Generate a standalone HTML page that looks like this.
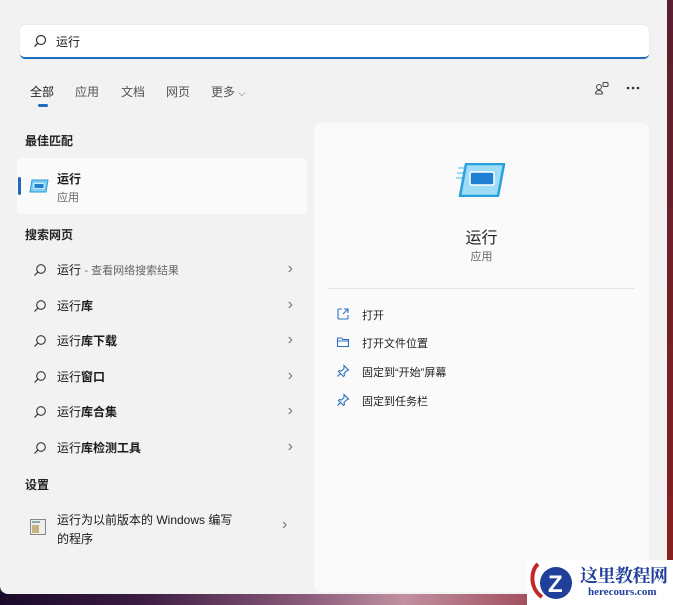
<!DOCTYPE html>
<html><head><meta charset="utf-8"><style>
*{margin:0;padding:0;box-sizing:border-box}
body{width:673px;height:605px;overflow:hidden;background:#3a1a2a;font-family:"Liberation Sans","Noto Sans CJK SC",sans-serif;font-size:12px;color:#1a1a1a;position:relative}
.bg{position:absolute;left:0;top:592px;width:673px;height:13px;background:linear-gradient(90deg,#1a0a2a 0%,#3a1a40 20%,#8a5a7a 45%,#c090a0 60%,#a04a5a 80%,#7a1a1a 100%)}
.rs{position:absolute;left:666px;top:0;width:7px;height:605px;background:linear-gradient(#5a2030,#8a2020)}
.panel{position:absolute;left:0;top:0;width:667px;height:594px;background:#f2f2f2;border-radius:0 0 8px 8px}
.search{position:absolute;left:20px;top:25px;width:629px;height:34px;background:#fff;border-radius:5px;border-bottom:2px solid #1f6bbd;box-shadow:0 0 1px #ccc}
.search span{position:absolute;left:36px;top:8px;font-size:12px}
.tabs{position:absolute;top:83px;left:30px;font-size:12px;color:#555}
.tabs span{position:absolute;white-space:nowrap}
.ul{position:absolute;left:38px;top:104px;width:10px;height:3px;border-radius:2px;background:#1f6bbd}
.h{position:absolute;left:25px;font-weight:bold;font-size:12px;color:#222}
.best{position:absolute;left:17px;top:158px;width:290px;height:56px;background:#fafafa;border-radius:4px}
.bar{position:absolute;left:18px;top:177px;width:3px;height:18px;background:#1f6bbd;border-radius:2px}
.row{position:absolute;left:33px;width:260px;height:20px}
.row .t{position:absolute;left:24px;top:2px;font-weight:bold;font-size:12px;white-space:nowrap}
.row .c{position:absolute;right:0;top:0px;color:#777;font-size:16px;line-height:20px}
.right{position:absolute;left:314px;top:123px;width:335px;height:469px;background:#fafafa;border-radius:6px}
.act{position:absolute;left:48px;font-size:11px;color:#222}
.act svg{position:absolute;left:-26px;top:0}
</style></head><body>
<div class="bg"></div><div class="rs"></div>
<div class="panel">
<div class="search"><svg style="position:absolute;left:13px;top:9px" width="14" height="14" viewBox="0 0 14 14"><circle cx="8" cy="6" r="4.5" fill="none" stroke="#333" stroke-width="1.2"/><path d="M4.8 9.2L1.5 12.5" stroke="#333" stroke-width="1.3"/></svg><span>运行</span></div>
<div class="tabs"><span style="left:0;color:#222">全部</span><span style="left:45px">应用</span><span style="left:91px">文档</span><span style="left:136px">网页</span><span style="left:181px">更多 <small style="font-size:9px">⌵</small></span></div>
<div class="ul"></div>
<svg style="position:absolute;left:594px;top:81px" width="16" height="16" viewBox="0 0 16 16" fill="none" stroke="#444" stroke-width="1"><circle cx="5" cy="6" r="2.5"/><path d="M1.5 13c0-2.5 1.5-3.5 3.5-3.5s3.5 1 3.5 3.5M1.5 13h7"/><rect x="9" y="1.5" width="5" height="4" rx="1"/></svg>
<svg style="position:absolute;left:626px;top:86px" width="14" height="4" viewBox="0 0 14 4" fill="#333"><circle cx="2" cy="2" r="1.3"/><circle cx="7" cy="2" r="1.3"/><circle cx="12" cy="2" r="1.3"/></svg>
<div class="h" style="top:132px">最佳匹配</div>
<div class="best"></div><div class="bar"></div>
<svg style="position:absolute;left:29px;top:179px" width="20" height="14" viewBox="0 0 20 14"><path d="M3 1h16l-2 12H1z" fill="#7dd0f2" stroke="#2a9ad8" stroke-width="1"/><rect x="5" y="4.5" width="10" height="5" rx="1" fill="#1f7fd0" stroke="#fff" stroke-width="0.8"/></svg>
<div style="position:absolute;left:57px;top:170px;font-weight:bold">运行</div>
<div style="position:absolute;left:57px;top:189px;font-size:11px;color:#666">应用</div>
<div class="h" style="top:226px">搜索网页</div>
<div class="row" style="top:259px"><svg width="14" height="14" viewBox="0 0 14 14" style="position:absolute;top:4px"><circle cx="8" cy="6" r="4.3" fill="none" stroke="#333" stroke-width="1.1"/><path d="M4.8 9.2L1.5 12.5" stroke="#333" stroke-width="1.2"/></svg><span class="t" style="font-weight:normal">运行 <span style="color:#666;font-size:11px">- 查看网络搜索结果</span></span><span class="c">›</span></div>
<div class="row" style="top:295px"><svg width="14" height="14" viewBox="0 0 14 14" style="position:absolute;top:4px"><circle cx="8" cy="6" r="4.3" fill="none" stroke="#333" stroke-width="1.1"/><path d="M4.8 9.2L1.5 12.5" stroke="#333" stroke-width="1.2"/></svg><span class="t"><span style="font-weight:normal">运行</span>库</span><span class="c">›</span></div>
<div class="row" style="top:330px"><svg width="14" height="14" viewBox="0 0 14 14" style="position:absolute;top:4px"><circle cx="8" cy="6" r="4.3" fill="none" stroke="#333" stroke-width="1.1"/><path d="M4.8 9.2L1.5 12.5" stroke="#333" stroke-width="1.2"/></svg><span class="t"><span style="font-weight:normal">运行</span>库下载</span><span class="c">›</span></div>
<div class="row" style="top:366px"><svg width="14" height="14" viewBox="0 0 14 14" style="position:absolute;top:4px"><circle cx="8" cy="6" r="4.3" fill="none" stroke="#333" stroke-width="1.1"/><path d="M4.8 9.2L1.5 12.5" stroke="#333" stroke-width="1.2"/></svg><span class="t"><span style="font-weight:normal">运行</span>窗口</span><span class="c">›</span></div>
<div class="row" style="top:401px"><svg width="14" height="14" viewBox="0 0 14 14" style="position:absolute;top:4px"><circle cx="8" cy="6" r="4.3" fill="none" stroke="#333" stroke-width="1.1"/><path d="M4.8 9.2L1.5 12.5" stroke="#333" stroke-width="1.2"/></svg><span class="t"><span style="font-weight:normal">运行</span>库合集</span><span class="c">›</span></div>
<div class="row" style="top:437px"><svg width="14" height="14" viewBox="0 0 14 14" style="position:absolute;top:4px"><circle cx="8" cy="6" r="4.3" fill="none" stroke="#333" stroke-width="1.1"/><path d="M4.8 9.2L1.5 12.5" stroke="#333" stroke-width="1.2"/></svg><span class="t"><span style="font-weight:normal">运行</span>库检测工具</span><span class="c">›</span></div>
<div class="h" style="top:476px">设置</div>
<svg style="position:absolute;left:30px;top:519px" width="16" height="16" viewBox="0 0 16 16"><rect x="0.5" y="0.5" width="15" height="15" fill="#eee" stroke="#888"/><rect x="2" y="6" width="7" height="8" fill="#c8b080"/><rect x="2" y="2" width="8" height="2" fill="#8aa"/></svg>
<div style="position:absolute;left:57px;top:511px;line-height:19px">运行为以前版本的 Windows 编写<br>的程序</div>
<div style="position:absolute;left:282px;top:516px;color:#777;font-size:16px">›</div>
<div class="right">
<svg style="position:absolute;left:142px;top:40px" width="50" height="34" viewBox="0 0 50 34"><path d="M2 5h8M1 10h8M0 15h8" stroke="#9fd8f2" stroke-width="2"/><path d="M10 1h38l-6 32H4z" fill="#9fdcf6" stroke="#29a0e0" stroke-width="2.5" stroke-linejoin="round"/><rect x="14" y="9" width="24" height="13" rx="2" fill="#1f80d6" stroke="#fff" stroke-width="1.5"/></svg>
<div style="position:absolute;left:0;width:335px;text-align:center;top:101px;font-size:16px;color:#222">运行</div>
<div style="position:absolute;left:0;width:335px;text-align:center;top:125px;font-size:11px;color:#666">应用</div>
<div style="position:absolute;left:14px;top:165px;width:306px;height:1px;background:#e4e4e4"></div>
<div class="act" style="top:184px"><svg width="14" height="14" viewBox="0 0 14 14" fill="none" stroke="#2a72c0" stroke-width="1.1"><path d="M6 2H3a1 1 0 0 0-1 1v8a1 1 0 0 0 1 1h8a1 1 0 0 0 1-1V8M8 2h4v4M12 2L7 7"/></svg>打开</div>
<div class="act" style="top:212px"><svg width="14" height="14" viewBox="0 0 14 14" fill="none" stroke="#2a72c0" stroke-width="1.1"><path d="M1.5 3h4l1.5 1.5h5.5v7h-11z M1.5 6h11"/></svg>打开文件位置</div>
<div class="act" style="top:241px"><svg width="14" height="14" viewBox="0 0 14 14" fill="none" stroke="#2a72c0" stroke-width="1.1"><path d="M8 1.5l4.5 4.5-2 1-2.5 2.5.5 2-1 1-5-5 1-1 2 .5L8 4.5z M4.5 9.5L1.5 12.5"/></svg>固定到“开始”屏幕</div>
<div class="act" style="top:270px"><svg width="14" height="14" viewBox="0 0 14 14" fill="none" stroke="#2a72c0" stroke-width="1.1"><path d="M8 1.5l4.5 4.5-2 1-2.5 2.5.5 2-1 1-5-5 1-1 2 .5L8 4.5z M4.5 9.5L1.5 12.5"/></svg>固定到任务栏</div>
</div>
</div>
<div style="position:absolute;left:527px;top:560px;width:146px;height:45px;background:#fff"></div>
<svg style="position:absolute;left:528px;top:561px" width="48" height="42" viewBox="0 0 48 42"><path d="M10 3C2 10 2 28 14 36" stroke="#c0282a" stroke-width="4" fill="none"/><circle cx="28" cy="22" r="16" fill="#1f3f9a"/><text x="20" y="31" font-size="24" font-weight="bold" fill="#fff" font-family="Liberation Sans">Z</text></svg>
<div style="position:absolute;left:580px;top:562px;font-size:18px;font-weight:bold;color:#1f3f9a;font-family:'Liberation Serif','Noto Serif CJK SC',serif;letter-spacing:-0.5px">这里教程网</div>
<div style="position:absolute;left:588px;top:586px;font-size:11px;font-weight:bold;color:#1f3f9a;font-family:'Liberation Serif',serif">herecours.com</div>
</body></html>
